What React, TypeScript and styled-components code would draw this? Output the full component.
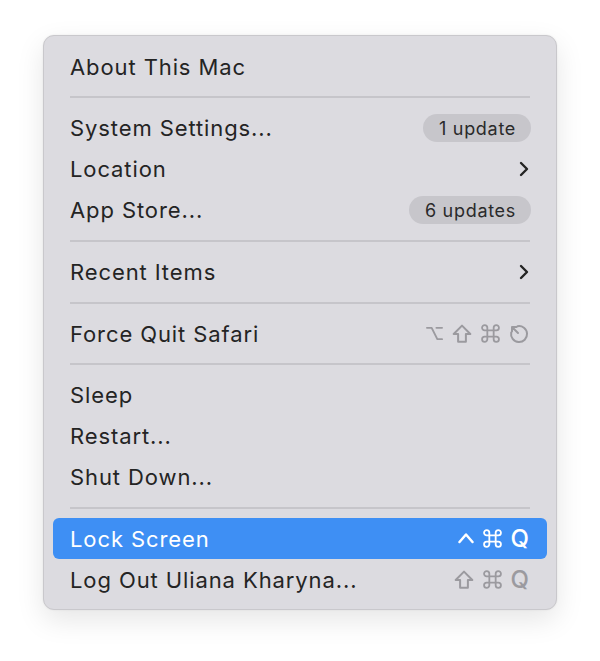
import React from "react";
import styled, { createGlobalStyle } from "styled-components";

const Global = createGlobalStyle`
  html, body { margin: 0; padding: 0; background: #ffffff; }
  body { font-family: Inter, "Noto Sans", sans-serif; }
`;

const Page = styled.div`
  width: 600px;
  height: 661px;
  padding: 35px 0 0 43px;
  box-sizing: border-box;
`;

const Panel = styled.div`
  width: 514px;
  box-sizing: border-box;
  background: #dcdbe0;
  border: 1px solid #c9c8cc;
  border-radius: 11px;
  padding: 10px 9px 9px 9px;
  box-shadow: 0 10px 28px rgba(0, 0, 0, 0.10), 0 0 2px rgba(0, 0, 0, 0.08);
  display: flex;
  flex-direction: column;
`;

const Row = styled.div<{ $active?: boolean }>`
  height: 41px;
  display: flex;
  align-items: center;
  justify-content: space-between;
  padding: 0 18px 0 17px;
  border-radius: 6px;
  background: ${(p) => (p.$active ? "#3e8ff4" : "transparent")};
  color: ${(p) => (p.$active ? "#ffffff" : "#242424")};
`;

const Label = styled.span`
  font-size: 22px;
  letter-spacing: 0.9px;
  font-weight: 400;
`;

const Separator = styled.div`
  height: 20.7px;
  display: flex;
  align-items: center;
  padding: 0 17px;
  &::after {
    content: "";
    flex: 1;
    height: 2px;
    background: #c6c5ca;
  }
`;

const Badge = styled.span`
  height: 28px;
  border-radius: 14px;
  background: #c7c6cb;
  color: #2a2a2a;
  font-size: 18px;
  letter-spacing: 0.7px;
  padding: 0 15px 0 16px;
  margin-right: -2px;
  display: flex;
  align-items: center;
`;

const Shortcut = styled.span<{ $active?: boolean }>`
  display: flex;
  align-items: center;
  gap: 9px;
  color: ${(p) => (p.$active ? "#ffffff" : "#9b9a9f")};
`;

const KeyQ = styled.span`
  font-size: 24px;
  font-weight: 500;
  line-height: 1;
`;

const Chevron = () => (
  <svg width="10" height="16" viewBox="0 0 10 16" fill="none">
    <path d="M2 2 L8 8 L2 14" stroke="#242424" strokeWidth="2.4" strokeLinecap="round" strokeLinejoin="round" />
  </svg>
);

const OptionKey = ({ c }: { c: string }) => (
  <svg width="17" height="17" viewBox="0 0 18 18" fill="none">
    <path d="M1 3 H6 L12 15 H17 M11 3 H17" stroke={c} strokeWidth="2" strokeLinecap="round" strokeLinejoin="round" />
  </svg>
);

const ShiftKey = ({ c }: { c: string }) => (
  <svg width="20" height="20" viewBox="0 0 18 18" fill="none">
    <path d="M9 1.5 L16.5 9 H12.5 V16 H5.5 V9 H1.5 Z" stroke={c} strokeWidth="1.8" strokeLinejoin="round" />
  </svg>
);

const CmdKey = ({ c }: { c: string }) => (
  <svg width="19" height="19" viewBox="0 0 18 18" fill="none">
    <path
      d="M6 6 V3.5 A2.5 2.5 0 1 0 3.5 6 H14.5 A2.5 2.5 0 1 0 12 3.5 V14.5 A2.5 2.5 0 1 0 14.5 12 H3.5 A2.5 2.5 0 1 0 6 14.5 Z"
      stroke={c}
      strokeWidth="1.7"
      strokeLinejoin="round"
    />
  </svg>
);

const EscKey = ({ c }: { c: string }) => (
  <svg width="20" height="20" viewBox="0 0 20 20" fill="none">
    <path d="M8.5 2.2 A8 8 0 1 1 2.2 8.5" stroke={c} strokeWidth="2" strokeLinecap="round" />
    <path d="M9 9 L3 3 M3 3 H7.5 M3 3 V7.5" stroke={c} strokeWidth="2" strokeLinecap="round" strokeLinejoin="round" />
  </svg>
);

const CtrlKey = ({ c }: { c: string }) => (
  <svg width="16" height="16" viewBox="0 0 16 16" fill="none">
    <path d="M1.5 11 L8 3.5 L14.5 11" stroke={c} strokeWidth="2.5" strokeLinecap="round" strokeLinejoin="round" />
  </svg>
);

export default function App() {
  const gray = "#9b9a9f";
  return (
    <>
      <Global />
      <Page>
        <Panel>
          <Row>
            <Label>About This Mac</Label>
          </Row>
          <Separator />
          <Row>
            <Label>System Settings...</Label>
            <Badge>1 update</Badge>
          </Row>
          <Row>
            <Label>Location</Label>
            <Chevron />
          </Row>
          <Row>
            <Label>App Store...</Label>
            <Badge>6 updates</Badge>
          </Row>
          <Separator />
          <Row>
            <Label>Recent Items</Label>
            <Chevron />
          </Row>
          <Separator />
          <Row>
            <Label>Force Quit Safari</Label>
            <Shortcut>
              <OptionKey c={gray} />
              <ShiftKey c={gray} />
              <CmdKey c={gray} />
              <EscKey c={gray} />
            </Shortcut>
          </Row>
          <Separator />
          <Row>
            <Label>Sleep</Label>
          </Row>
          <Row>
            <Label>Restart...</Label>
          </Row>
          <Row>
            <Label>Shut Down...</Label>
          </Row>
          <Separator />
          <Row $active>
            <Label>Lock Screen</Label>
            <Shortcut $active>
              <CtrlKey c="#ffffff" />
              <CmdKey c="#ffffff" />
              <KeyQ>Q</KeyQ>
            </Shortcut>
          </Row>
          <Row>
            <Label>Log Out Uliana Kharyna...</Label>
            <Shortcut>
              <ShiftKey c={gray} />
              <CmdKey c={gray} />
              <KeyQ>Q</KeyQ>
            </Shortcut>
          </Row>
        </Panel>
      </Page>
    </>
  );
}
